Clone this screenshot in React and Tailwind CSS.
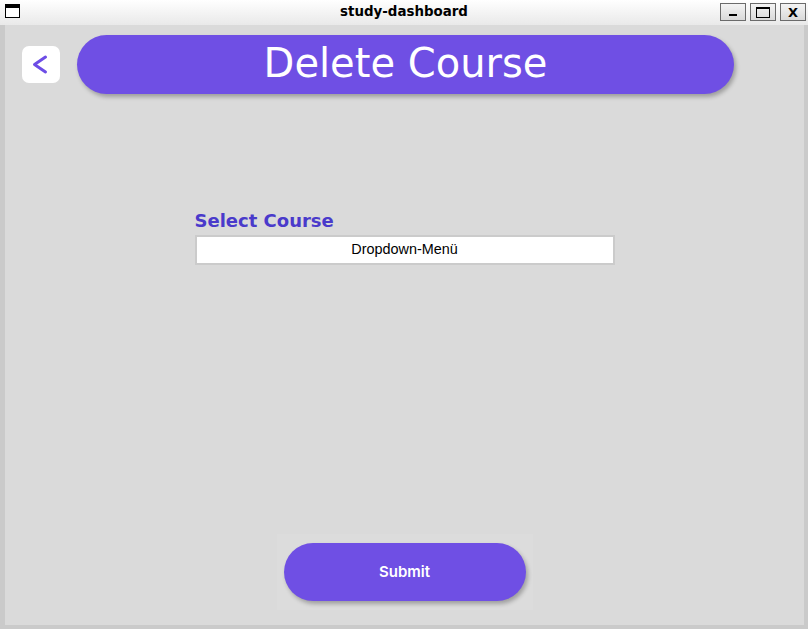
import { useState } from 'react'

// ── Window title bar ──────────────────────────────────────────────────────────
function TitleBar() {
  return (
    <div className="relative h-[25px] flex items-center justify-center bg-gradient-to-b from-white to-[#e9e9e9]">
      {/* Window icon */}
      <div className="absolute left-[5px] top-[4px] w-[15px] h-[14px] border border-black border-t-[4px] bg-white" />

      <span className="text-[13.4px] font-bold text-black font-['DejaVu_Sans',sans-serif]">
        study-dashboard
      </span>

      {/* Window controls */}
      <div className="absolute right-[2px] top-[3px] flex gap-[4px]">
        <button className="w-[26px] h-[18px] border border-[#6b6b6b] bg-gradient-to-b from-[#f4f4f4] to-[#d9d9d9] flex items-end justify-center pb-[4px]">
          <span className="block w-[8px] h-[2px] bg-black" />
        </button>
        <button className="w-[26px] h-[18px] border border-[#6b6b6b] bg-gradient-to-b from-[#f4f4f4] to-[#d9d9d9] flex items-center justify-center">
          <span className="block w-[14px] h-[11px] border border-black border-t-2" />
        </button>
        <button className="w-[26px] h-[18px] border border-[#6b6b6b] bg-gradient-to-b from-[#f4f4f4] to-[#d9d9d9] flex items-center justify-center text-[13px] font-bold leading-none text-black font-['DejaVu_Sans',sans-serif]">
          X
        </button>
      </div>
    </div>
  )
}

// ── Root component ────────────────────────────────────────────────────────────
export default function App() {
  const [course, setCourse] = useState('')

  return (
    <div className="w-[808px] h-[629px] flex flex-col bg-[#cacaca] overflow-hidden">
      <TitleBar />

      <main className="flex-1 mx-[5px] mb-[4px] mr-[4px] bg-[#dadada] flex flex-col items-stretch">

        {/* Header: back button + title pill */}
        <div className="flex items-center pt-[10px] pl-[17px] gap-[17px]">
          <button
            aria-label="Back"
            className="w-[38px] h-[37px] rounded-[7px] bg-white flex items-center justify-center"
          >
            <svg width="38" height="37" viewBox="0 0 38 37" fill="none">
              <path d="M23.5 11 L12.5 18.5 L23.5 26" stroke="#6d4de6" strokeWidth="3" strokeLinecap="round" strokeLinejoin="round" />
            </svg>
          </button>

          <div className="w-[657px] h-[59px] rounded-full bg-[#6f4fe4] shadow-[2px_3px_4px_rgba(0,0,0,0.28)] flex items-center justify-center pb-[4px]">
            <h1 className="text-[40px] leading-none text-white font-['DejaVu_Sans',sans-serif]">
              Delete Course
            </h1>
          </div>
        </div>

        {/* Course selection */}
        <div className="w-[420px] mx-auto mt-[115px] flex flex-col">
          <label className="text-[18px] leading-[24px] font-bold text-[#4a3acb] font-['DejaVu_Sans',sans-serif]">
            Select Course
          </label>
          <div className="mt-[2px] h-[30px] border-2 border-[#cbcbcb] bg-white flex items-center justify-center">
            <span className="text-[14.4px] text-black font-['Liberation_Sans',Arial,sans-serif]">
              {course || 'Dropdown-Menü'}
            </span>
          </div>
        </div>

        <div className="flex-1" />

        {/* Submit */}
        <div className="mx-auto mb-[15px] px-[7px] py-[9px] bg-[#dcdcdc]">
          <button
            onClick={() => setCourse('')}
            className="w-[242px] h-[58px] rounded-full bg-[#6f4fe4] shadow-[2px_3px_4px_rgba(0,0,0,0.28)] text-white text-[15px] font-semibold font-['Inter',sans-serif]"
          >
            Submit
          </button>
        </div>
      </main>
    </div>
  )
}
